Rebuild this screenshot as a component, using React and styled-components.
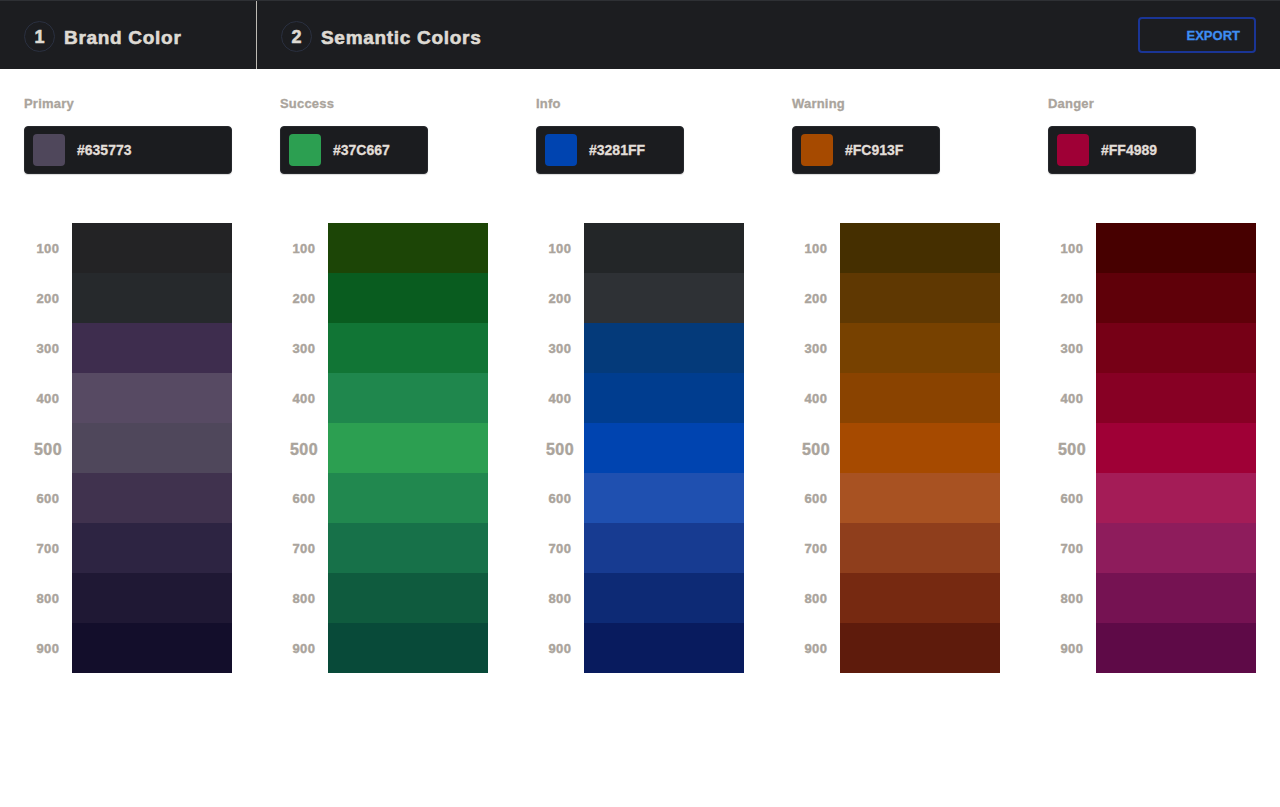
import React from 'react';
import styled, { createGlobalStyle } from 'styled-components';

const GlobalStyle = createGlobalStyle`
  * {
    box-sizing: border-box;
  }

  body {
    margin: 0;
    background: #fff;
    font-family: 'Liberation Sans', Arial, sans-serif;
  }
`;

const palettes = [
  {
    name: 'Primary',
    hex: '#635773',
    wide: true,
    shades: ['#232325', '#26292c', '#3e2d4e', '#574a63', '#4f475b', '#40324e', '#2d2442', '#1f1834', '#130e2b'],
  },
  {
    name: 'Success',
    hex: '#37C667',
    shades: ['#1c4506', '#095c1f', '#117535', '#1f874d', '#2c9f51', '#21884f', '#177149', '#0f5b3e', '#084a39'],
  },
  {
    name: 'Info',
    hex: '#3281FF',
    shades: ['#232628', '#2e3135', '#043a7a', '#003d8f', '#0044b0', '#1f50b0', '#173b91', '#0d2a75', '#081b5e'],
  },
  {
    name: 'Warning',
    hex: '#FC913F',
    shades: ['#452f00', '#5f3802', '#774100', '#8a4300', '#a64a00', '#a85222', '#8f3e1c', '#762911', '#5e1b0c'],
  },
  {
    name: 'Danger',
    hex: '#FF4989',
    shades: ['#470000', '#5f0009', '#760016', '#870024', '#9f0036', '#a41c57', '#8e1c5c', '#751252', '#5e0a47'],
  },
];

const Header = styled.header`
  display: flex;
  align-items: stretch;
  height: 69px;
  background-color: #1c1d20;
  border-top: 1px solid #2e3034;
`;

const Step = styled.div`
  display: flex;
  align-items: center;
  column-gap: 9px;
  padding: 2px 24px 0;
  width: ${(props) => props.width || 'auto'};
  flex: ${(props) => (props.grow ? 1 : 'none')};
  border-right: ${(props) => (props.divider ? '1px solid #bdbab4' : 'none')};
`;

const StepNumber = styled.div`
  width: 31px;
  height: 31px;
  border-radius: 50%;
  border: 1px solid #2a3040;
  display: flex;
  align-items: center;
  justify-content: center;
  color: #dedad3;
  font-size: 18px;
  font-weight: 700;
  -webkit-text-stroke: 0.6px #dedad3;
  padding-top: 2px;
`;

const StepTitle = styled.div`
  color: #dedad3;
  font-size: 19px;
  font-weight: 700;
  letter-spacing: 0.7px;
  -webkit-text-stroke: 0.6px #dedad3;
  padding-top: 4px;
`;

const ExportBtn = styled.button`
  margin-left: auto;
  margin-top: -2px;
  width: 118px;
  height: 36px;
  border: 2px solid #1a3596;
  border-radius: 4px;
  background: transparent;
  color: #3e8ef2;
  font-family: inherit;
  font-size: 13px;
  font-weight: 700;
  -webkit-text-stroke: 0.3px #3e8ef2;
  display: flex;
  align-items: center;
  justify-content: flex-end;
  padding: 0 14px 0 0;
  cursor: pointer;
`;

const Columns = styled.main`
  display: grid;
  grid-template-columns: repeat(5, 1fr);
  column-gap: 48px;
  padding: 27px 24px 0 24px;
`;

const Column = styled.section`
  display: flex;
  flex-direction: column;
`;

const Label = styled.div`
  color: #aaa49c;
  font-size: 13px;
  font-weight: 700;
  line-height: 15px;
  letter-spacing: 0.2px;
  -webkit-text-stroke: 0.3px #aaa49c;
`;

const ColorInput = styled.div`
  margin-top: 15px;
  display: flex;
  align-items: center;
  column-gap: 12px;
  width: ${(props) => (props.wide ? '100%' : '148px')};
  height: 48px;
  padding: 0 8px;
  background-color: #1b1c1f;
  border: 1px solid #26282c;
  border-radius: 4px;
  box-shadow: 0 1px 1px rgba(0, 0, 0, 0.15);
`;

const Swatch = styled.div`
  width: 32px;
  height: 32px;
  border-radius: 4px;
  background-color: ${(props) => props.color};
`;

const HexText = styled.div`
  color: #e2ded8;
  font-size: 14px;
  font-weight: 700;
  -webkit-text-stroke: 0.3px #e2ded8;
`;

const Scale = styled.div`
  margin-top: 49px;
  display: flex;
  flex-direction: column;
`;

const ScaleRow = styled.div`
  display: flex;
  height: 50px;
`;

const ShadeLabel = styled.div`
  width: 48px;
  display: flex;
  align-items: center;
  justify-content: center;
  color: #aaa49c;
  font-size: ${(props) => (props.base ? '16px' : '13px')};
  font-weight: 700;
  letter-spacing: 0.5px;
  -webkit-text-stroke: 0.4px #aaa49c;
  padding-top: ${(props) => (props.base ? '4px' : '0')};
`;

const ShadeBar = styled.div`
  flex: 1;
  background-color: ${(props) => props.color};
`;

const App = () => {
  return (
    <>
      <GlobalStyle />
      <Header>
        <Step width='257px' divider>
          <StepNumber>1</StepNumber>
          <StepTitle>Brand Color</StepTitle>
        </Step>
        <Step grow>
          <StepNumber>2</StepNumber>
          <StepTitle>Semantic Colors</StepTitle>
          <ExportBtn>EXPORT</ExportBtn>
        </Step>
      </Header>
      <Columns>
        {palettes.map((palette) => (
          <Column key={palette.name}>
            <Label>{palette.name}</Label>
            <ColorInput wide={palette.wide}>
              <Swatch color={palette.shades[4]} />
              <HexText>{palette.hex}</HexText>
            </ColorInput>
            <Scale>
              {palette.shades.map((shade, index) => (
                <ScaleRow key={index}>
                  <ShadeLabel base={index === 4}>{(index + 1) * 100}</ShadeLabel>
                  <ShadeBar color={shade} />
                </ScaleRow>
              ))}
            </Scale>
          </Column>
        ))}
      </Columns>
    </>
  );
};

export default App;
